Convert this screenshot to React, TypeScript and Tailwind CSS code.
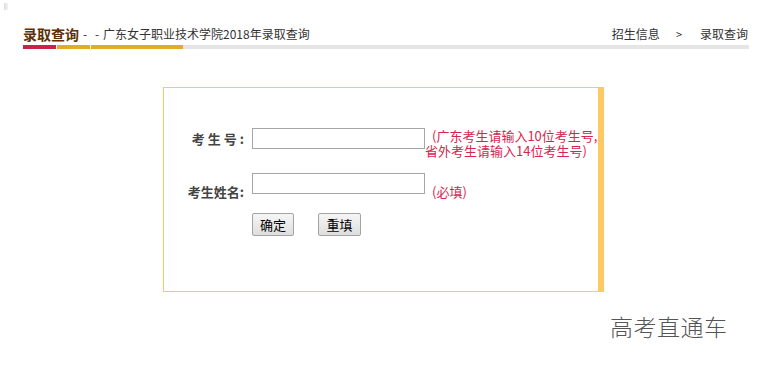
export default function App() {
  const cjk = { fontFamily: '"Noto Sans CJK SC", "Liberation Sans", sans-serif' }

  return (
    <div className="relative w-[757px] h-[370px] bg-white overflow-hidden" style={cjk}>
      {/* broken image placeholder */}
      <div className="absolute left-[4px] top-[3px] w-[4px] h-[7px] bg-gradient-to-r from-[#dcdcdc] to-[#f4f4f4]" />

      {/* header */}
      <div className="ml-[23px] w-[726px] pt-[23px]">
        <div className="flex items-center justify-between h-[22px]">
          <div className="flex items-center">
            <span className="text-[14px] font-bold text-[#5e3006] leading-none">录取查询</span>
            <span className="w-[24px] flex justify-around text-[12px] text-[#333] leading-none">
              <span>-</span>
              <span>-</span>
            </span>
            <span className="text-[12px] text-[#333] leading-none">广东女子职业技术学院2018年录取查询</span>
          </div>
          <div className="flex items-center text-[12px] text-[#333] leading-none pr-[1px]">
            <span>招生信息</span>
            <span className="ml-[16px] mr-[18px] text-[11px]">&gt;</span>
            <span>录取查询</span>
          </div>
        </div>
        <div className="flex h-[4px]">
          <div className="w-[33px] bg-[#c8244a]" />
          <div className="w-[33px] ml-[1px] bg-[#e6aa2a]" />
          <div className="w-[92px] ml-[1px] bg-[#e6aa2a]" />
          <div className="flex-1 bg-[#e5e5e5]" />
        </div>
      </div>

      {/* query box */}
      <div className="ml-[163px] mt-[38px] w-[441px] h-[205px] border border-[#fcc864] border-r-[6px] border-r-[#fec862] pt-[40px]">
        <div className="flex items-start h-[45px]">
          <div className="shrink-0 w-[80px] h-[21px] flex items-center justify-end text-[13px] font-bold text-[#444]">
            <span className="tracking-[3px]">考生号</span>
            <span>:</span>
          </div>
          <div className="shrink-0 ml-[8px] w-[173px] h-[21px] border border-[#a6a6a6] bg-white" />
          <div className="shrink-0 w-[176px] text-[13px] leading-[15px] indent-[7px] text-[#d6254d]">
            (广东考生请输入10位考生号,省外考生请输入14位考生号)
          </div>
        </div>

        <div className="flex items-start h-[40px]">
          <div className="shrink-0 w-[80px] mt-[11px] text-right text-[13px] leading-[15px] font-bold text-[#444]">
            考生姓名:
          </div>
          <div className="shrink-0 ml-[8px] w-[173px] h-[21px] border border-[#a6a6a6] bg-white" />
          <div className="ml-[7px] mt-[11px] text-[13px] leading-[15px] text-[#d6254d]">(必填)</div>
        </div>

        <div className="flex ml-[88px] gap-[24px]">
          <button className="w-[42px] h-[23px] border border-[#a3a3a3] rounded-[2px] bg-gradient-to-b from-[#f6f6f6] to-[#dedede] text-[13px] text-black leading-none">
            确定
          </button>
          <button className="w-[43px] h-[23px] border border-[#a3a3a3] rounded-[2px] bg-gradient-to-b from-[#f6f6f6] to-[#dedede] text-[13px] text-black leading-none">
            重填
          </button>
        </div>
      </div>

      {/* watermark */}
      <div className="absolute left-[610px] top-[315px] text-[23px] leading-none text-[#555] font-light tracking-[0.5px] [text-shadow:1px_1px_0_#fff]">
        高考直通车
      </div>
    </div>
  )
}
